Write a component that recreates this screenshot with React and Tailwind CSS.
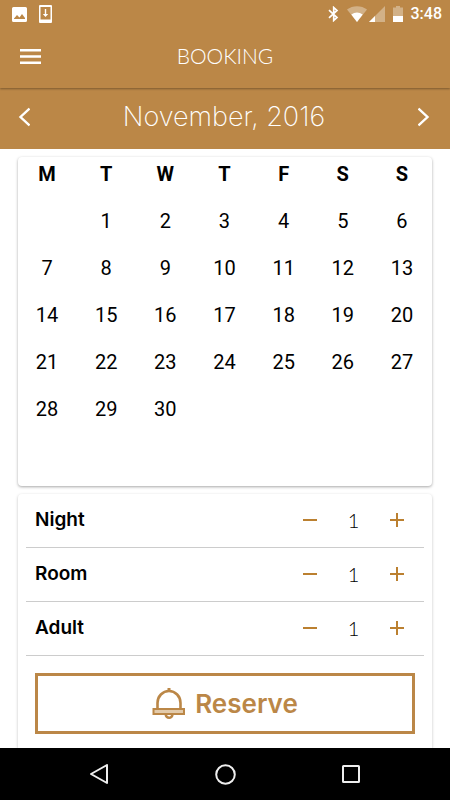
import React, { useState } from 'react';

const WEEKDAYS = ['M', 'T', 'W', 'T', 'F', 'S', 'S'];

// November 2016 starts on a Tuesday
const WEEKS = [
    [null, 1, 2, 3, 4, 5, 6],
    [7, 8, 9, 10, 11, 12, 13],
    [14, 15, 16, 17, 18, 19, 20],
    [21, 22, 23, 24, 25, 26, 27],
    [28, 29, 30, null, null, null, null],
    [null, null, null, null, null, null, null],
];

function StatusBar() {
    return (
        <div className="flex h-7 items-center justify-between pl-3 pr-2 text-white">
            <div className="flex items-center gap-3">
                <svg width="15" height="15" viewBox="0 0 15 15" aria-hidden="true">
                    <path fillRule="evenodd" fill="currentColor" d="M1.5 0h12A1.5 1.5 0 0 1 15 1.5v12a1.5 1.5 0 0 1-1.5 1.5h-12A1.5 1.5 0 0 1 0 13.5v-12A1.5 1.5 0 0 1 1.5 0zM2 12h11V11l-3-4-2.500 3.500L5 8l-3 3.500z" />
                </svg>
                <svg width="13" height="18" viewBox="0 0 13 18" aria-hidden="true">
                    <path fillRule="evenodd" fill="currentColor" d="M1 0h11a1 1 0 0 1 1 1v16a1 1 0 0 1-1 1H1a1 1 0 0 1-1-1V1a1 1 0 0 1 1-1zM1.500 2v12.500h10V2z" />
                    <path fill="currentColor" d="M5.800 4h1.400v5h2L6.500 12 3.800 9h2z" />
                </svg>
            </div>
            <div className="flex items-center">
                <svg width="11" height="16" viewBox="0 0 11 16" className="mr-2" aria-hidden="true">
                    <path fill="none" stroke="currentColor" strokeWidth="1.700" d="M1 4.200l8 7.400L5.700 14.500v-13L9 4.400l-8 7.400" />
                </svg>
                <svg width="20" height="16" viewBox="0 0 20 16" aria-hidden="true">
                    <path fill="currentColor" opacity=".35" d="M0 3.500C5.500-1 14.500-1 20 3.500L10 16z" />
                    <path fill="currentColor" d="M4.300 8.500Q10 4.500 15.700 8.500L10 16z" />
                </svg>
                <svg width="16" height="16" viewBox="0 0 16 16" className="ml-0.5" aria-hidden="true">
                    <path fill="currentColor" opacity=".35" d="M16 0v16H0z" />
                    <path fill="currentColor" d="M6 10v6H0z" />
                </svg>
                <svg width="10" height="16" viewBox="0 0 10 16" className="ml-2 mr-2" aria-hidden="true">
                    <path fill="currentColor" opacity=".35" d="M3 0h4v1.500h3V10H0V1.500h3z" />
                    <path fill="currentColor" d="M0 10h10v6H0z" />
                </svg>
                <span className="font-['Roboto',sans-serif] text-base font-medium leading-5">3:48</span>
            </div>
        </div>
    );
}

function Header() {
    return (
        <header className="relative z-10 bg-[#bb8747] shadow-[0_1px_2px_rgba(0,0,0,0.35)]">
            <StatusBar />
            <div className="grid h-15 grid-cols-[40px_1fr_40px] items-center px-4 pb-1">
                <button type="button" aria-label="Open menu" className="flex pl-1 text-white">
                    <svg width="21" height="15" viewBox="0 0 21 15" aria-hidden="true">
                        <path fill="currentColor" d="M0 0h21v2.500H0zM0 6.300h21v2.400H0zM0 12.500h21V15H0z" />
                    </svg>
                </button>
                <h1 className="text-center text-[21px] font-light leading-7 text-white">BOOKING</h1>
            </div>
        </header>
    );
}

function MonthBar() {
    return (
        <div className="flex h-[61px] items-center justify-between bg-[#bb8747] pb-1 pl-4 pr-[18px] text-white">
            <button type="button" aria-label="Previous month" className="flex p-0.5">
                <svg width="12" height="20" viewBox="0 0 12 20" aria-hidden="true">
                    <path fill="none" stroke="currentColor" strokeWidth="2.400" d="M11.500 1.500L2.500 10l9 8.500" />
                </svg>
            </button>
            <h2 className="font-['Inter',sans-serif] text-[27px] font-extralight leading-8">November, 2016</h2>
            <button type="button" aria-label="Next month" className="flex p-0.5">
                <svg width="12" height="20" viewBox="0 0 12 20" aria-hidden="true">
                    <path fill="none" stroke="currentColor" strokeWidth="2.400" d="M.5 1.500l9 8.500-9 8.500" />
                </svg>
            </button>
        </div>
    );
}

function Calendar() {
    return (
        <section className="rounded-sm bg-white pb-[7px] shadow-[0_1px_3px_rgba(0,0,0,0.35)]">
            <table className="w-full table-fixed font-['Roboto',sans-serif] text-xl leading-6 text-black">
                <thead>
                    <tr>
                        {WEEKDAYS.map((day, i) => (
                            <th key={i} className="h-10 p-0 pb-1.5 pr-px font-bold">{day}</th>
                        ))}
                    </tr>
                </thead>
                <tbody>
                    {WEEKS.map((week, w) => (
                        <tr key={w}>
                            {week.map((date, d) => (
                                <td key={d} className="h-[47px] p-0 pr-px text-center">
                                    {date && <button type="button">{date}</button>}
                                </td>
                            ))}
                        </tr>
                    ))}
                </tbody>
            </table>
        </section>
    );
}

function Counter({ label }) {
    const [count, setCount] = useState(1);

    return (
        <div className="flex h-[54px] items-center justify-between border-b border-[#cccccc] pb-0.5 pl-[9px] pr-4">
            <span className="font-['Inter',sans-serif] text-[19px] font-semibold leading-6 text-black">{label}</span>
            <div className="flex items-center text-[#bb8030]">
                <button type="button" aria-label={`Fewer: ${label}`} onClick={() => setCount(Math.max(1, count - 1))} className="flex p-1">
                    <svg width="14" height="14" viewBox="0 0 14 14" aria-hidden="true">
                        <path fill="currentColor" d="M0 6h14v2H0z" />
                    </svg>
                </button>
                <output aria-label={label} className="w-[65px] text-center text-xl font-light leading-6 text-black">{count}</output>
                <button type="button" aria-label={`More: ${label}`} onClick={() => setCount(count + 1)} className="flex p-1">
                    <svg width="14" height="14" viewBox="0 0 14 14" aria-hidden="true">
                        <path fill="currentColor" d="M0 6h6V0h2v6h6v2H8v6H6V8H0z" />
                    </svg>
                </button>
            </div>
        </div>
    );
}

function BellIcon() {
    return (
        <svg width="33" height="32" viewBox="0 0 33 32" aria-hidden="true">
            <g fill="none" stroke="currentColor" strokeWidth="2.600">
                <path d="M5.500 20v-5a11.500 12 0 0 1 23 0V20" />
                <path d="M17 0v4" strokeWidth="3" />
                <path fill="#e3cbab" strokeWidth="2" d="M1.500 21h30.500v5H1.500z" />
                <path d="M13.800 26.500a3.300 3.300 0 0 0 6.600 0" />
            </g>
        </svg>
    );
}

function NavBar() {
    return (
        <nav className="grid h-[52px] grid-cols-[1fr_126px_1fr] items-center bg-black text-[#eeeeee]">
            <button type="button" aria-label="Back" className="flex justify-end pr-[54px]">
                <svg width="18" height="20" viewBox="0 0 18 20" aria-hidden="true">
                    <path fill="none" stroke="currentColor" strokeWidth="2" strokeLinejoin="round" d="M17 1v18L1 10z" />
                </svg>
            </button>
            <button type="button" aria-label="Home" className="flex justify-center">
                <svg width="21" height="21" viewBox="0 0 21 21" aria-hidden="true">
                    <circle cx="10.500" cy="10.500" r="9.300" fill="none" stroke="currentColor" strokeWidth="2" />
                </svg>
            </button>
            <button type="button" aria-label="Recent apps" className="flex pl-[54px]">
                <svg width="18" height="18" viewBox="0 0 18 18" aria-hidden="true">
                    <rect x="1" y="1" width="16" height="16" rx="0.500" fill="none" stroke="currentColor" strokeWidth="2" />
                </svg>
            </button>
        </nav>
    );
}

function App() {
    return (
        <div className="flex min-h-screen flex-col bg-white font-['Lato',sans-serif]">
            <Header />
            <MonthBar />
            <main className="flex flex-1 flex-col gap-2 overflow-hidden px-[18px] pt-2">
                <Calendar />
                <section className="flex-1 rounded-t-sm bg-white px-2 pb-3.5 shadow-[0_1px_3px_rgba(0,0,0,0.25)]">
                    <Counter label="Night" />
                    <Counter label="Room" />
                    <Counter label="Adult" />
                    <div className="px-[9px] pt-[17px]">
                        <button type="button" className="flex h-[61px] w-full items-center justify-center gap-2.5 border-[3px] border-[#bb8747] font-['Inter',sans-serif] text-[26px] font-semibold leading-8 text-[#bb8747]">
                            <BellIcon />
                            <span>Reserve</span>
                        </button>
                    </div>
                </section>
            </main>
            <NavBar />
        </div>
    );
}

export default App;
